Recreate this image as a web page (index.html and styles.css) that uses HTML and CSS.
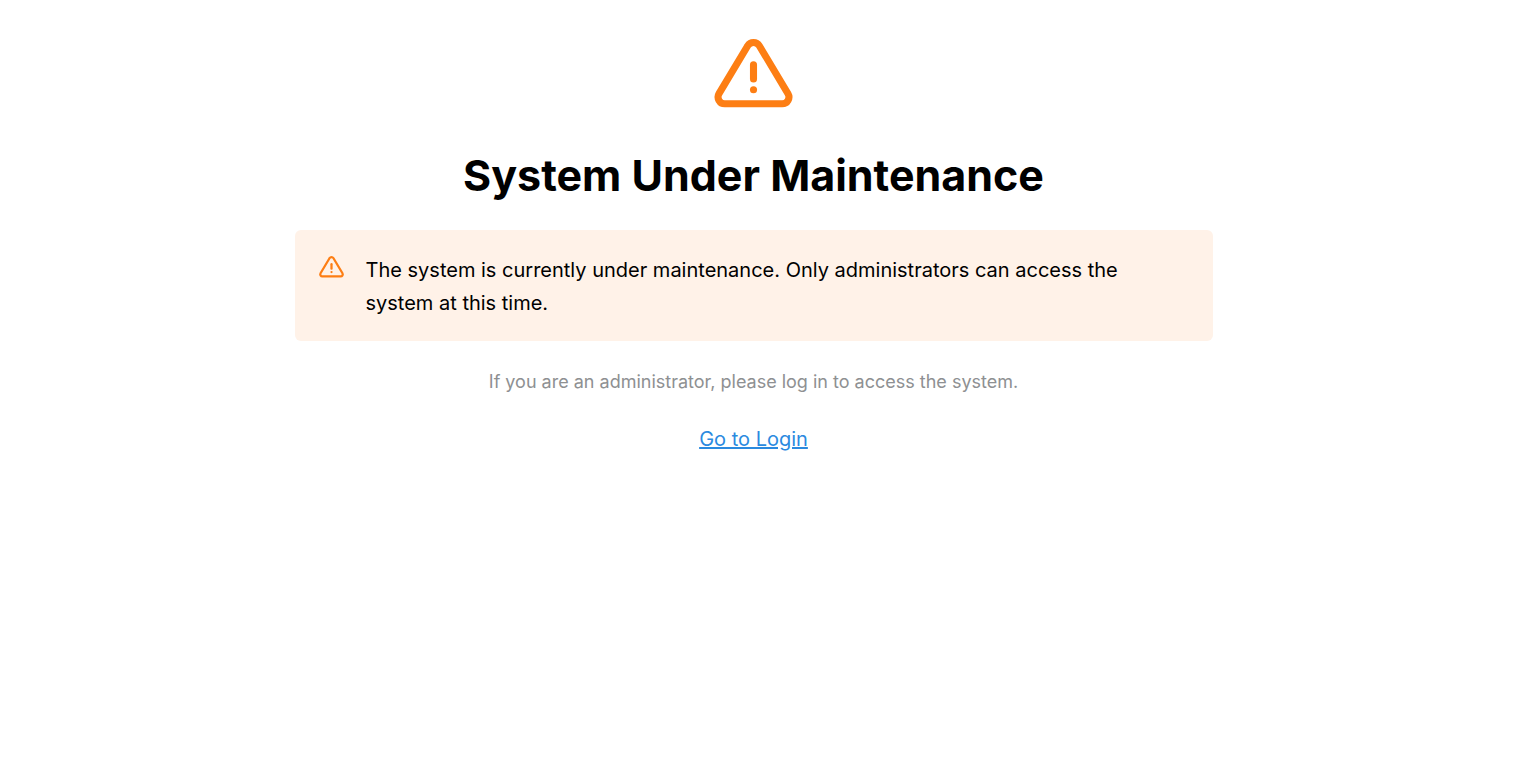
FILE: index.html
```html
<!DOCTYPE html>
<html lang="en">
<head>
    <meta charset="UTF-8">
    <meta name="viewport" content="width=device-width, initial-scale=1.0">
    <title>System Under Maintenance</title>
    <link rel="stylesheet" href="styles.css">
</head>
<body>
    <main class="container">
        <svg class="hero-icon" viewBox="0 0 24 24" aria-hidden="true">
            <path d="M12 9v4"></path>
            <path d="M10.363 3.591l-8.106 13.534a1.914 1.914 0 0 0 1.636 2.871h16.214a1.914 1.914 0 0 0 1.636 -2.87l-8.106 -13.536a1.914 1.914 0 0 0 -3.274 0z"></path>
            <path d="M12 16h.01"></path>
        </svg>
        <h1 class="title">System Under Maintenance</h1>
        <div class="alert" role="alert">
            <svg class="alert-icon" viewBox="0 0 24 24" aria-hidden="true">
                <path d="M12 9v4"></path>
                <path d="M10.363 3.591l-8.106 13.534a1.914 1.914 0 0 0 1.636 2.871h16.214a1.914 1.914 0 0 0 1.636 -2.87l-8.106 -13.536a1.914 1.914 0 0 0 -3.274 0z"></path>
                <path d="M12 16h.01"></path>
            </svg>
            <p class="alert-text">The system is currently under maintenance. Only administrators can access the system at this time.</p>
        </div>
        <p class="hint">If you are an administrator, please log in to access the system.</p>
        <a class="login-link" href="/login">Go to Login</a>
    </main>
</body>
</html>
```
FILE: styles.css
```css
body {
    margin: 0;
    padding: 0 31px 0 0;
    background-color: #fff;
    color: #000;
    font-family: Inter, sans-serif;
}

.container {
    display: flex;
    flex-direction: column;
    align-items: center;
    gap: 24px;
    max-width: 918px;
    margin: 0 auto;
    padding: 33px 24px;
}

.hero-icon,
.alert-icon {
    flex-shrink: 0;
    fill: none;
    stroke: #fd7e14;
    stroke-width: 2;
    stroke-linecap: round;
    stroke-linejoin: round;
}

.hero-icon {
    width: 85px;
    height: 85px;
}

.title {
    margin: 4px 0 2px;
    font-size: 43px;
    line-height: 58px;
    font-weight: 700;
}

.alert {
    display: flex;
    align-items: flex-start;
    gap: 21px;
    box-sizing: border-box;
    width: 100%;
    padding: 24px 23px 21px;
    border-radius: 6px;
    background-color: #fff2e8;
}

.alert-icon {
    width: 27px;
    height: 27px;
}

.alert-text {
    margin: 0;
    font-size: 20px;
    line-height: 33px;
}

.hint {
    margin: 2px 0 0;
    color: #8e9092;
    font-size: 18px;
    line-height: 30px;
}

.login-link {
    margin-top: 2px;
    color: #2b8adf;
    font-size: 20px;
    line-height: 32px;
    text-decoration-thickness: 2px;
}
```
